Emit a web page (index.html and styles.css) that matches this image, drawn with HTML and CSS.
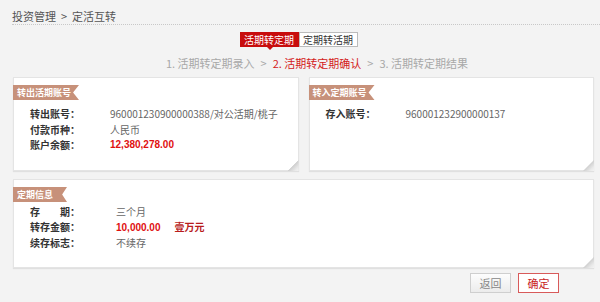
FILE: index.html
```html
<!DOCTYPE html>
<html>
<head>
  <title>定活互转</title>
  <link rel="stylesheet" href="styles.css">
</head>
<body>

  <!-- Breadcrumb -->
  <div class="crumb">投资管理<span class="crumb-sep">&gt;</span>定活互转</div>

  <!-- Switch tabs -->
  <div class="tabs">
    <span class="tab active">活期转定期</span>
    <span class="tab">定期转活期</span>
  </div>

  <!-- Steps -->
  <div class="steps">
    <span>1. 活期转定期录入</span>
    <span class="sep">&gt;</span>
    <span class="current">2. 活期转定期确认</span>
    <span class="sep">&gt;</span>
    <span>3. 活期转定期结果</span>
  </div>

  <div class="cards">
    <div class="card half">
      <div class="ribbon">转出活期账号</div>
      <div class="rows">
        <div class="label">转出账号：</div><div class="value">960001230900000388/对公活期/桃子</div>
        <div class="label">付款币种：</div><div class="value">人民币</div>
        <div class="label">账户余额：</div><div class="value money">12,380,278.00</div>
      </div>
      <div class="curl"></div>
    </div>

    <div class="card half">
      <div class="ribbon">转入定期账号</div>
      <div class="rows">
        <div class="label">存入账号：</div><div class="value">960001232900000137</div>
      </div>
      <div class="curl"></div>
    </div>
  </div>

  <div class="cards">
    <div class="card full">
      <div class="ribbon short">定期信息</div>
      <div class="rows wide">
        <div class="label">存&emsp;&emsp;期：</div><div class="value">三个月</div>
        <div class="label">转存金额：</div><div class="value"><span class="money">10,000.00</span><span class="upper">壹万元</span></div>
        <div class="label">续存标志：</div><div class="value">不续存</div>
      </div>
      <div class="curl"></div>
    </div>
  </div>

  <div class="actions">
    <button class="btn">返回</button>
    <button class="btn primary">确定</button>
  </div>

</body>
</html>
```

FILE: styles.css
```css
body {
  margin: 0;
  background: #f3f3f3;
  font-family: "Noto Sans CJK SC", "Liberation Sans", sans-serif;
  font-size: 12px;
  color: #333;
  overflow: hidden;
}

.crumb {
  margin-left: 12px;
  padding-top: 8px;
  height: 16px;
  line-height: 16px;
  font-size: 11px;
  color: #555;
  border-bottom: 1px dotted #c8c8c8;
}

.crumb-sep {
  margin: 0 5px;
}

.tabs {
  display: flex;
  justify-content: center;
  margin-top: 7px;
  padding-right: 3px;
}

.tab {
  position: relative;
  width: 57px;
  height: 13px;
  line-height: 13px;
  text-align: center;
  font-size: 10px;
  color: #333;
  background: #fff;
  border: 1px solid #bbb;
}

.tab.active {
  background: #c80d0d;
  border-color: #c80d0d;
  color: #fff;
}

.tab.active::after {
  content: "";
  position: absolute;
  left: 26px;
  bottom: -4px;
  border-left: 3px solid transparent;
  border-right: 3px solid transparent;
  border-top: 3px solid #c80d0d;
}

.steps {
  display: flex;
  justify-content: center;
  gap: 6px;
  margin-top: 8px;
  padding-left: 34px;
  height: 16px;
  line-height: 16px;
  font-size: 11px;
  color: #a8a8a8;
}

.steps .current {
  color: #d42020;
}

.cards {
  display: flex;
  gap: 10px;
  margin: 6px 6px 0 13px;
}

.cards + .cards {
  margin-top: 8px;
}

.card {
  position: relative;
  background: #fff;
  border: 1px solid #e4e4e4;
  box-shadow: 0 1px 1px rgba(0, 0, 0, 0.08);
}

.card.half {
  flex: 1;
  height: 92px;
}

.card.full {
  flex: 1;
  height: 87px;
}

.ribbon {
  margin-top: 7px;
  margin-left: -1px;
  width: 66px;
  height: 15px;
  line-height: 15px;
  padding-left: 4px;
  box-sizing: border-box;
  background: #c7917a;
  color: #fff;
  font-size: 9px;
  font-weight: bold;
  clip-path: polygon(0 0, 100% 0, 91% 50%, 100% 100%, 0 100%);
}

.ribbon.short {
  width: 54px;
}

.rows {
  display: grid;
  grid-template-columns: 80px auto;
  margin-top: 6px;
  padding-left: 16px;
  line-height: 15.5px;
  font-size: 10px;
}

.rows.wide {
  grid-template-columns: 86px auto;
  margin-top: 2px;
  line-height: 15px;
}

.label {
  color: #333;
  font-weight: bold;
}

.value {
  color: #666;
}

.money {
  color: #e01010;
  font-weight: bold;
  font-family: "Liberation Sans", sans-serif;
}

.upper {
  margin-left: 14px;
  color: #b81c1c;
  font-weight: bold;
}

.curl {
  position: absolute;
  right: -1px;
  bottom: -1px;
  width: 11px;
  height: 11px;
  background: linear-gradient(135deg, #fff 0, #fff 45%, #cfcfcf 50%, #eaeaea 80%, #f3f3f3 100%);
  clip-path: polygon(100% 0, 100% 100%, 0 100%);
}

.actions {
  display: flex;
  justify-content: flex-end;
  gap: 7px;
  margin: 5px 41px 0 0;
}

.btn {
  width: 41px;
  height: 20px;
  padding: 0;
  font-family: inherit;
  font-size: 11px;
  color: #888;
  background: linear-gradient(#fdfdfd, #ececec);
  border: 1px solid #cfcfcf;
  cursor: pointer;
}

.btn.primary {
  color: #c81e1e;
  background: #fff;
  border-color: #d85a5a;
}
```
